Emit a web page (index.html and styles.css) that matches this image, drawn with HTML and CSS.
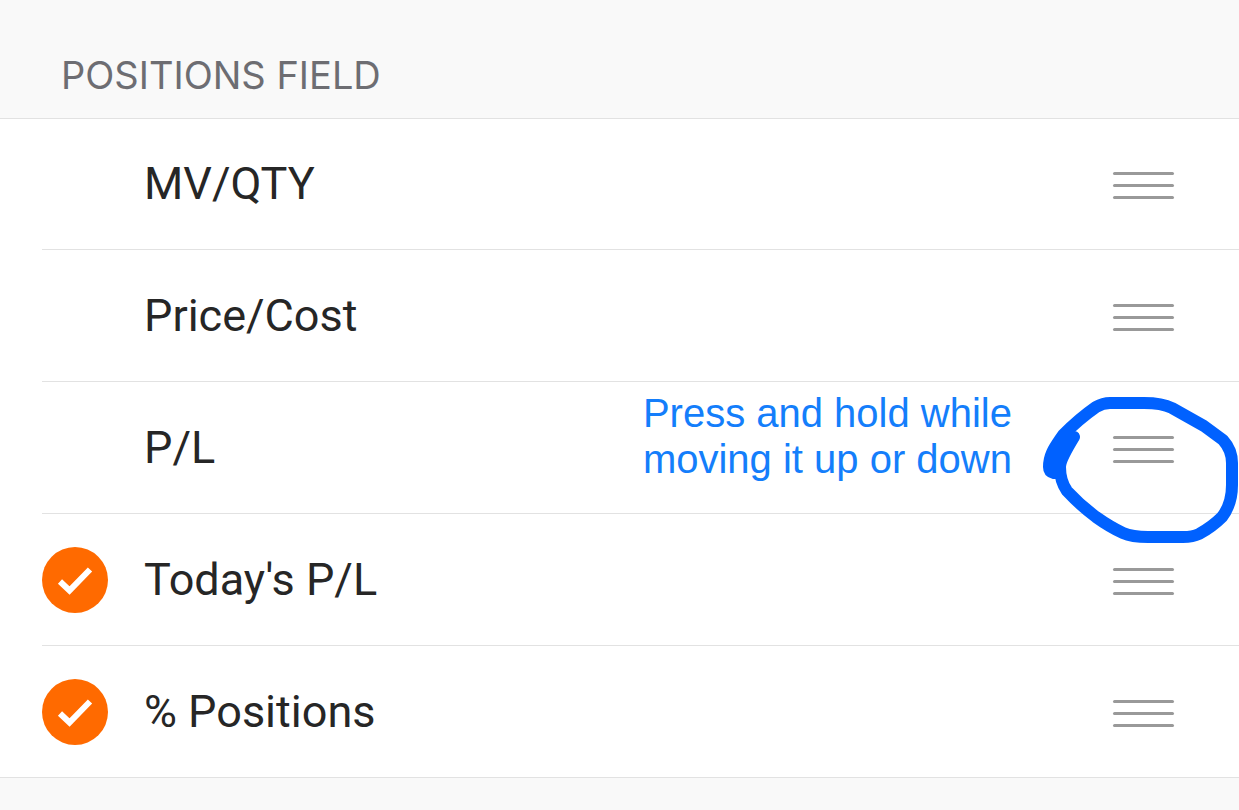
FILE: index.html
```
<!DOCTYPE html>
<html lang="en">
  <head>
    <meta charset="utf-8">
    <meta name="viewport" content="width=device-width, initial-scale=1">
    <title>Positions Field</title>
    <link rel="stylesheet" href="styles.css">
  </head>
  <body>
    <h1 class="section-title">POSITIONS FIELD</h1>
    <ul class="field-list">
      <li class="field">
        <label class="field-label">
          <input type="checkbox" class="field-check">
          <span>MV/QTY</span>
        </label>
        <button type="button" class="handle" aria-label="Move MV/QTY"><i></i><i></i><i></i></button>
      </li>
      <li class="field">
        <label class="field-label">
          <input type="checkbox" class="field-check">
          <span>Price/Cost</span>
        </label>
        <button type="button" class="handle" aria-label="Move Price/Cost"><i></i><i></i><i></i></button>
      </li>
      <li class="field">
        <label class="field-label">
          <input type="checkbox" class="field-check">
          <span>P/L</span>
        </label>
        <button type="button" class="handle" aria-label="Move P/L"><i></i><i></i><i></i></button>
        <!-- hint drawn over the row -->
        <div class="hint">
          <p class="hint-text">Press and hold while<br>moving it up or down</p>
          <svg class="hint-circle" width="199" height="156" viewBox="0 0 199 156" aria-hidden="true">
            <path class="hint-blob" d="M9 80 L11 67 L23 45 L34 47 L23 65 L20 80 L13 83 Z"/>
            <path d="M14 83 Q9 82 9 77 C9 64 15 57 23 45 C34 34 46 24 56 17 Q63 13 70 13 L104 13 Q122 13 132 18 L164 36 L183 50 Q192 60 192 73 L192 95 Q192 114 182 127 Q172 137 159 144 Q153 147 143 147 L108 147 Q92 147 83 143 Q70 137 56 127 Q40 115 27 101 Q20 91 20 77 Q20 70 34 47"/>
          </svg>
        </div>
      </li>
      <li class="field">
        <label class="field-label">
          <input type="checkbox" class="field-check" checked>
          <span>Today's P/L</span>
        </label>
        <button type="button" class="handle" aria-label="Move Today's P/L"><i></i><i></i><i></i></button>
      </li>
      <li class="field">
        <label class="field-label">
          <input type="checkbox" class="field-check" checked>
          <span>% Positions</span>
        </label>
        <button type="button" class="handle" aria-label="Move % Positions"><i></i><i></i><i></i></button>
      </li>
    </ul>
  </body>
</html>
```
FILE: styles.css
```
* {
  box-sizing: border-box;
}

body {
  margin: 0;
  background-color: #f9f9f9;
  color: #262626;
  font-family: Roboto, sans-serif;
}

.section-title {
  margin: 0;
  padding: 51px 61px 19px;
  border-bottom: 1px solid #e2e2e2;
  color: #6d6d72;
  font: 400 38px/48px Inter, sans-serif;
}

.field-list {
  margin: 0;
  padding: 0 0 0 42px;
  list-style: none;
  background-color: #fff;
  border-bottom: 1px solid #e2e2e2;
}

.field {
  position: relative;
  display: flex;
  align-items: center;
  min-height: 132px;
  padding-right: 65px;
  border-bottom: 1px solid #e2e2e2;
}

.field:first-child,
.field:last-child {
  min-height: 131px;
}

.field:last-child {
  border-bottom: 0;
}

.field-label {
  display: flex;
  flex: 1;
  align-items: center;
  gap: 36px;
  font-size: 45px;
  line-height: 56px;
}

.field-check {
  flex: none;
  width: 66px;
  height: 66px;
  margin: 0;
  border-radius: 50%;
  appearance: none;
}

.field-check:checked {
  background: #ff6a00 url("data:image/svg+xml,%3Csvg xmlns='http://www.w3.org/2000/svg' viewBox='0 0 66 66'%3E%3Cpath d='M18 34.5 27.5 43.5 48 22.5' fill='none' stroke='%23fff' stroke-width='6'/%3E%3C/svg%3E");
}

.handle {
  display: flex;
  flex-direction: column;
  gap: 9px;
  width: 61px;
  margin: 0;
  padding: 3px 0 0;
  border: 0;
  background: none;
  cursor: grab;
}

.handle i {
  width: 100%;
  height: 3px;
  border-radius: 2px;
  background-color: #999;
}

.hint {
  position: absolute;
  top: 8px;
  right: 0;
  display: flex;
  gap: 28px;
  pointer-events: none;
}

.hint-text {
  margin: 0;
  color: #147efb;
  font: 40px/46px "Liberation Sans", sans-serif;
}

.hint-circle {
  fill: none;
  stroke: #0061ff;
  stroke-width: 12;
  stroke-linecap: round;
  stroke-linejoin: round;
}

.hint-blob {
  fill: #0061ff;
  stroke: none;
}
```
